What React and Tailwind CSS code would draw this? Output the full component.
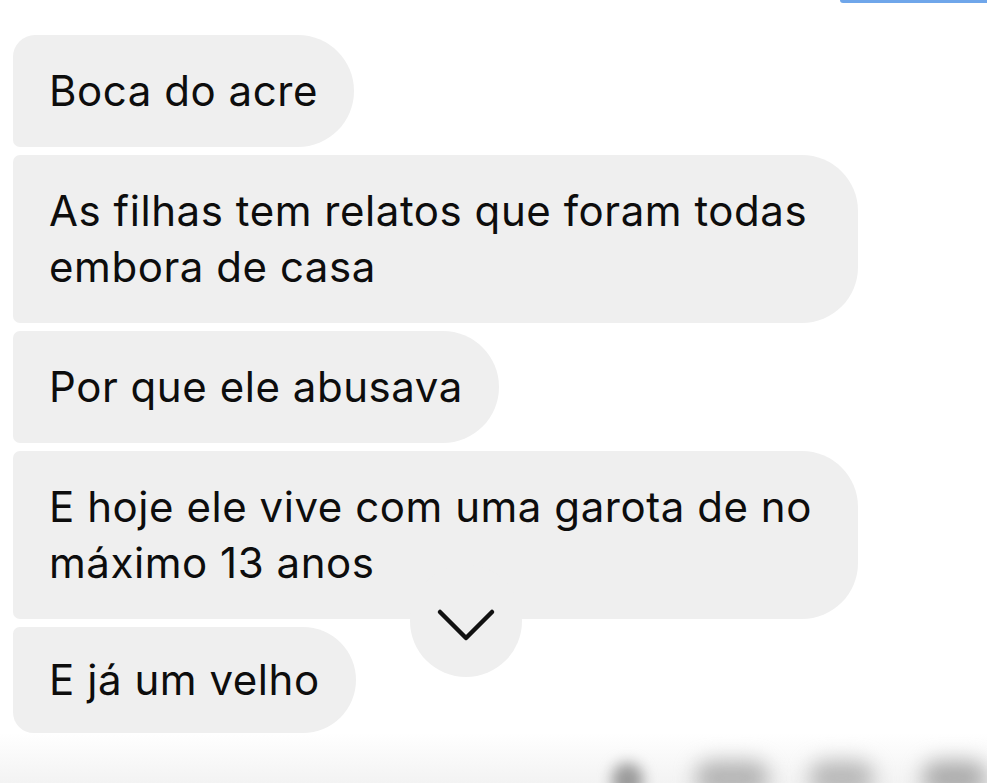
import React from 'react';

const Bubble = ({ children, wide, corners, py = 'py-[28px]' }) => (
  <div
    className={`whitespace-nowrap bg-[#efefef] ${py} pl-[36px] pr-[36px] text-[42px] leading-[56px] tracking-[0.55px] rounded-tr-[56px] rounded-br-[56px] ${corners} ${wide ? 'w-[845px]' : 'w-fit'}`}
  >
    {children}
  </div>
);

export default function App() {
  return (
    <div className="relative flex h-[783px] w-[987px] flex-col overflow-hidden bg-white font-['Inter','Liberation_Sans',sans-serif] text-[#0d0d0d]">
      {/* top strip with cut-off blue element */}
      <div className="flex h-[35px] shrink-0 justify-end">
        <div className="h-[3px] w-[147px] rounded-bl-[3px] bg-[#6fa6ea]" />
      </div>

      <div className="flex flex-col items-start gap-2 pl-[13px]">
        <Bubble corners="rounded-tl-[22px] rounded-bl-[7px]">Boca do acre</Bubble>
        <Bubble wide corners="rounded-tl-[7px] rounded-bl-[7px]">
          As filhas tem relatos que foram todas
          <br />
          embora de casa
        </Bubble>
        <Bubble corners="rounded-tl-[7px] rounded-bl-[7px]">Por que ele abusava</Bubble>
        <Bubble wide corners="rounded-tl-[7px] rounded-bl-[7px]">
          E hoje ele vive com uma garota de no
          <br />
          máximo 13 anos
        </Bubble>
        <Bubble py="py-[25px]" corners="rounded-tl-[7px] rounded-bl-[22px]">E já um velho</Bubble>
      </div>

      {/* blurred bottom bar */}
      <div className="flex flex-1 items-end bg-gradient-to-b from-white to-[#f3f3f3] pl-[612px]">
        <div className="mb-[-14px] h-[34px] w-[34px] rounded-full bg-[#9a9a9a] blur-[7px]" />
        <div className="mb-[-12px] ml-[52px] h-[34px] w-[80px] rounded-full bg-[#b4b4b4] blur-[10px]" />
        <div className="mb-[-12px] ml-[40px] h-[34px] w-[70px] rounded-full bg-[#b8b8b8] blur-[10px]" />
        <div className="mb-[-12px] ml-[48px] h-[34px] w-[70px] rounded-full bg-[#acacac] blur-[10px]" />
      </div>

      {/* scroll-to-bottom button */}
      <div className="absolute left-[410px] top-[565px] flex h-[112px] w-[112px] items-center justify-center rounded-full bg-[#efefef]">
        <svg width="60" height="34" viewBox="0 0 60 34" className="mt-[8px]" fill="none">
          <path d="M4 4 L30 30 L56 4" stroke="#111" strokeWidth="4.5" strokeLinecap="round" strokeLinejoin="round" />
        </svg>
      </div>
    </div>
  );
}
